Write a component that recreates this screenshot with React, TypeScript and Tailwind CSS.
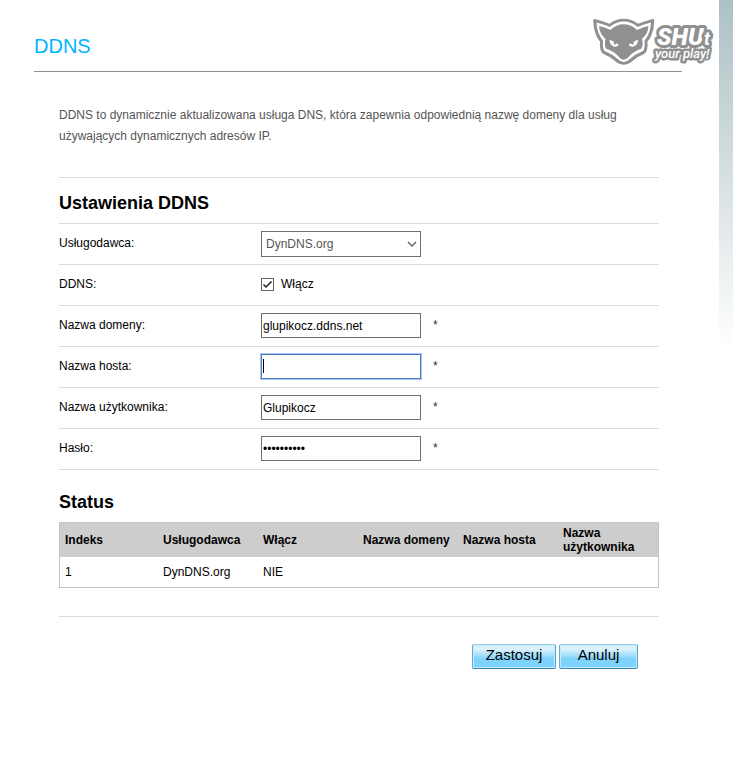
import { useState, type ReactNode } from "react";

const columns = [
  "Indeks",
  "Usługodawca",
  "Włącz",
  "Nazwa domeny",
  "Nazwa hosta",
  "Nazwa użytkownika",
];

const entries = [["1", "DynDNS.org", "NIE", "", "", ""]];

const boxClass =
  "block h-[25px] w-40 rounded-none border border-[#707070] bg-white px-px text-xs text-black outline-none";

function Row({
  label,
  htmlFor,
  required = false,
  children,
}: {
  label: string;
  htmlFor: string;
  required?: boolean;
  children: ReactNode;
}) {
  return (
    <div className="flex h-[41px] items-center border-b border-[#dcdcdc] pb-px">
      <label htmlFor={htmlFor} className="w-[202px] shrink-0 pb-px">
        {label}
      </label>
      {children}
      {required && <span className="pb-px pl-3 text-[#333]">*</span>}
    </div>
  );
}

function Logo() {
  return (
    <svg
      viewBox="0 0 124 52"
      className="absolute top-4 right-1 h-[52px] w-[124px]"
      role="img"
      aria-label="SHUt your play!"
    >
      <path
        d="M4.500 3.300Q2 2.500 2.200 5Q2.500 13 5 19Q6.500 23 9 25.500Q8.500 30 9.700 34.500Q10.500 37.500 14 38.800Q20 41 24 45Q28.500 48.800 32.700 48.800Q37 48.800 41.500 45Q45.500 41 51.500 38.800Q55 37.500 55.800 34.500Q57 30 56.500 25.500Q59 23 60.500 19Q63 13 63.300 5Q63.500 2.500 61 3.300Q54 5 47 7.800Q40.500 2.700 32.700 2.700Q25 2.700 18.500 7.800Q11.500 5 4.500 3.300Z"
        fill="#909090"
      />
      <path
        d="M5.500 6.500Q6 14 8.200 18.500Q10 22.500 12 24.500Q11.500 30 12.500 33.500Q13 35.300 15.500 36Q22 38.500 26 42.500Q29.500 46 32.700 46Q36 46 39.500 42.500Q43.500 38.500 50 36Q52.500 35.300 53 33.500Q54 30 53.500 24.500Q55.500 22.500 57.300 18.500Q59.500 14 60 6.500Q53 8.300 46.500 11Q40.500 5.500 32.700 5.500Q25 5.500 19 11Q12.500 8.300 5.500 6.500Z"
        fill="#fff"
      />
      <path
        d="M8 10Q13.500 11 19.500 14Q25 8.300 32.700 8.300Q40.500 8.300 46 14Q52 11 57.500 10Q57 18 51 23Q52.500 28 50.500 32.500Q43 35 38.500 40Q35 43.800 32.700 43.800Q30.500 43.800 27 40Q22.500 35 15 32.500Q13 28 14.500 23Q8.500 18 8 10Z"
        fill="#909090"
      />
      <path d="M18.500 23.500L27.800 28.500Q26.500 31.300 23 30.500Q18.500 29 18.500 23.500Z" fill="#fff" />
      <path d="M47 23.500L37.700 28.500Q39 31.300 42.500 30.500Q47 29 47 23.500Z" fill="#fff" />
      <circle cx="24" cy="27.300" r="1.300" fill="#909090" />
      <circle cx="41.500" cy="27.300" r="1.300" fill="#909090" />
      <g
        fill="#fff"
        stroke="#909090"
        strokeWidth="6"
        strokeLinejoin="round"
        paintOrder="stroke"
        fontFamily="Roboto, 'Liberation Sans', sans-serif"
        fontStyle="italic"
      >
        <text x="66" y="29" fontSize="24" fontWeight="900">
          SHU
        </text>
        <text x="113" y="29" fontSize="18" fontWeight="700">
          t
        </text>
        <text x="64" y="42" fontSize="13" fontWeight="500" strokeWidth="5">
          your play!
        </text>
      </g>
    </svg>
  );
}

function ActionButton({ children, className }: { children: ReactNode; className: string }) {
  return (
    <button
      type="button"
      className={`h-[25px] rounded-xs border border-t-[#9dcbea] border-r-[#5b9fce] border-b-[#3f84b4] border-l-[#6aabd6] bg-linear-to-b from-[#d9f0fd] from-20% to-[#7dd3fb] to-60% pb-1 text-[15px] leading-5 text-black inset-ring inset-ring-[#c4eafd] ${className}`}
    >
      {children}
    </button>
  );
}

export default function App() {
  const [enabled, setEnabled] = useState(true);

  return (
    <div className="flex min-h-screen bg-white font-['Liberation_Sans',Arial,sans-serif] text-xs text-black">
      <main className="relative min-w-0 flex-1">
        <Logo />
        <header className="mr-[37px] ml-[34px] h-[72px] border-b border-[#909090] pt-[34px]">
          <h1 className="text-xl leading-6 text-[#00b4ff]">DDNS</h1>
        </header>

        <div className="mr-[60px] ml-[59px]">
          <p className="border-b border-[#dcdcdc] pt-[33px] pb-[30px] leading-[21px] text-[#555]">
            DDNS to dynamicznie aktualizowana usługa DNS, która zapewnia odpowiednią nazwę domeny
            dla usług używających dynamicznych adresów IP.
          </p>

          <form>
            <h2 className="h-[46px] border-b border-[#dcdcdc] pt-[13px] text-lg leading-6 font-bold">
              Ustawienia DDNS
            </h2>
            <Row label="Usługodawca:" htmlFor="provider">
              <div className="relative">
                <select
                  id="provider"
                  className="block h-[26px] w-40 appearance-none rounded-none border border-[#707070] bg-white pl-1 text-xs text-[#555] outline-none"
                >
                  <option>DynDNS.org</option>
                </select>
                <svg
                  viewBox="0 0 10 6"
                  className="pointer-events-none absolute top-2.5 right-1 h-1.5 w-2.5"
                  fill="none"
                  stroke="#666"
                  strokeWidth="1.500"
                >
                  <path d="M1 1L5 5L9 1" />
                </svg>
              </div>
            </Row>
            <Row label="DDNS:" htmlFor="enable">
              <span className="relative block size-[13px]">
                <input
                  id="enable"
                  type="checkbox"
                  checked={enabled}
                  onChange={(e) => setEnabled(e.target.checked)}
                  className="peer block size-[13px] appearance-none border border-[#666] bg-white"
                />
                <svg
                  viewBox="0 0 13 13"
                  className="pointer-events-none absolute inset-0 hidden size-[13px] peer-checked:block"
                  fill="none"
                  stroke="#222"
                  strokeWidth="1.500"
                >
                  <path d="M2.500 6.500L5 9L10.500 3.500" />
                </svg>
              </span>
              <label htmlFor="enable" className="pb-px pl-[7px]">
                Włącz
              </label>
            </Row>
            <Row label="Nazwa domeny:" htmlFor="domain" required>
              <input id="domain" type="text" defaultValue="glupikocz.ddns.net" className={boxClass} />
            </Row>
            <Row label="Nazwa hosta:" htmlFor="host" required>
              <div className="relative">
                <input
                  id="host"
                  type="text"
                  className="block h-[25px] w-40 border border-[#5078b8] bg-white px-px text-xs caret-transparent ring-1 ring-[#a5c7fe] outline-none"
                />
                <span className="absolute top-[5px] left-0.5 h-3.5 w-px bg-black" />
              </div>
            </Row>
            <Row label="Nazwa użytkownika:" htmlFor="user" required>
              <input id="user" type="text" defaultValue="Glupikocz" className={boxClass} />
            </Row>
            <Row label="Hasło:" htmlFor="password" required>
              <input
                id="password"
                type="password"
                defaultValue="0123456789"
                className={boxClass}
              />
            </Row>
          </form>

          <section className="border-b border-[#dcdcdc] pb-7">
            <h2 className="h-[52px] pt-5 text-lg leading-6 font-bold">Status</h2>
            <table className="w-full table-fixed border-separate border-spacing-0 border border-[#c4c4c4]">
              <thead>
                <tr className="h-[34px] bg-[#cdcdcd]">
                  {columns.map((name, i) => (
                    <th
                      key={name}
                      className={`px-[5px] py-0 text-left leading-[14px] font-bold ${i > 0 ? "w-[100px]" : ""}`}
                    >
                      {name}
                    </th>
                  ))}
                </tr>
              </thead>
              <tbody>
                {entries.map((cells) => (
                  <tr key={cells[0]} className="h-[30px]">
                    {cells.map((cell, i) => (
                      <td key={columns[i]} className="px-[5px] py-0">
                        {cell}
                      </td>
                    ))}
                  </tr>
                ))}
              </tbody>
            </table>
          </section>

          <div className="flex justify-end gap-[3px] pt-[27px] pr-[21px]">
            <ActionButton className="w-[84px]">Zastosuj</ActionButton>
            <ActionButton className="w-[79px]">Anuluj</ActionButton>
          </div>
        </div>
      </main>
      <div className="h-[350px] w-3.5 shrink-0 bg-linear-to-b from-[#adc1c5] to-white" />
    </div>
  );
}
